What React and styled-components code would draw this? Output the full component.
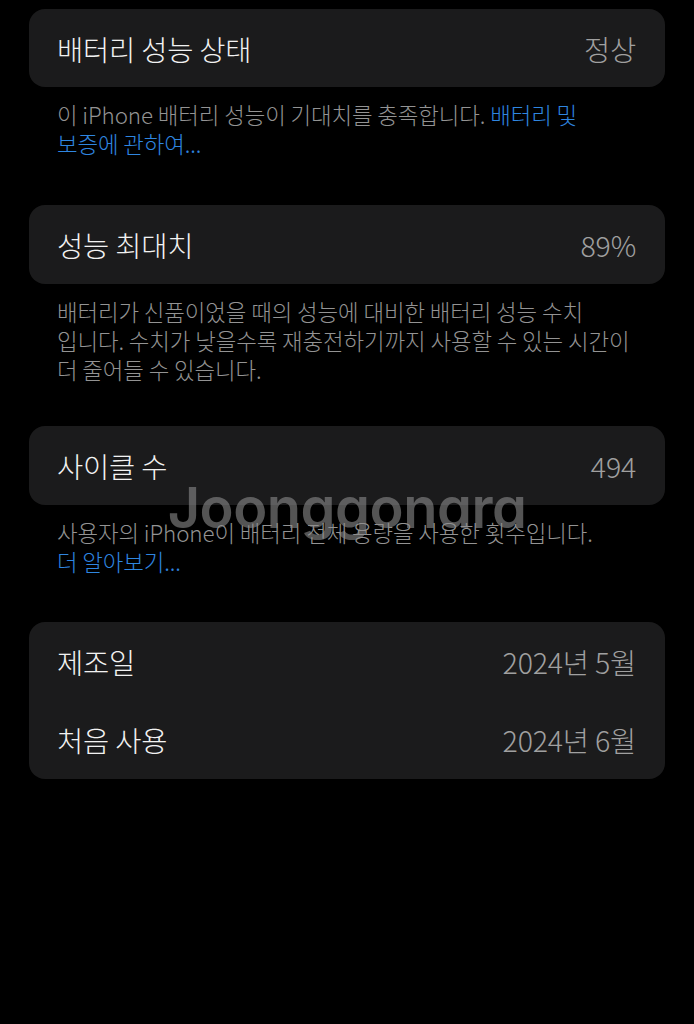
import React from "react";
import styled, { createGlobalStyle } from "styled-components";

const GlobalStyle = createGlobalStyle`
  html, body {
    margin: 0;
    padding: 0;
    background: #000;
  }
  body {
    font-family: "Noto Sans CJK KR", "Noto Sans", sans-serif;
    -webkit-font-smoothing: antialiased;
  }
`;

const Page = styled.div`
  position: relative;
  min-height: 1024px;
  background: #000;
  padding: 9px 29px 0;
  box-sizing: border-box;
`;

const Group = styled.div`
  background: #1b1b1c;
  border-radius: 16px;
  overflow: hidden;
`;

const Row = styled.div`
  display: flex;
  align-items: center;
  justify-content: space-between;
  height: ${(p) => p.$h || 78}px;
  padding: 0 29px 0 28px;
  font-size: 28.5px;
  font-weight: 300;
  letter-spacing: -0.2px;
`;

const Label = styled.span`
  color: #f2f2f2;
`;

const Value = styled.span`
  color: #a0a0a0;
`;

const Caption = styled.p`
  margin: 0;
  padding: 13px 28px ${(p) => p.$after || 44}px;
  font-size: 22.4px;
  font-weight: 300;
  line-height: 29px;
  color: #939393;
  letter-spacing: -0.1px;
  white-space: nowrap;
`;

const Link = styled.span`
  color: #2f86e0;
`;

// site watermark stamped across the middle of the page
const Watermark = styled.div`
  position: absolute;
  left: 0;
  right: 0;
  top: 474px;
  text-align: center;
  font-family: Inter, "Liberation Sans", sans-serif;
  font-feature-settings: "cv11" 1;
  font-size: 56px;
  font-weight: 600;
  letter-spacing: -0.5px;
  color: rgba(140, 140, 140, 0.6);
  pointer-events: none;
`;

export default function App() {
  return (
    <Page>
      <GlobalStyle />

      <Group>
        <Row>
          <Label>배터리 성능 상태</Label>
          <Value>정상</Value>
        </Row>
      </Group>
      <Caption $after={47}>
        이 iPhone 배터리 성능이 기대치를 충족합니다. <Link>배터리 및</Link>
        <br />
        <Link>보증에 관하여...</Link>
      </Caption>

      <Group>
        <Row $h={79}>
          <Label>성능 최대치</Label>
          <Value>89%</Value>
        </Row>
      </Group>
      <Caption $after={42}>
        배터리가 신품이었을 때의 성능에 대비한 배터리 성능 수치
        <br />
        입니다. 수치가 낮을수록 재충전하기까지 사용할 수 있는 시간이
        <br />
        더 줄어들 수 있습니다.
      </Caption>

      <Group>
        <Row $h={79}>
          <Label>사이클 수</Label>
          <Value>494</Value>
        </Row>
      </Group>
      <Caption $after={46}>
        사용자의 iPhone이 배터리 전체 용량을 사용한 횟수입니다.
        <br />
        <Link>더 알아보기...</Link>
      </Caption>

      <Group>
        <Row $h={78.5}>
          <Label>제조일</Label>
          <Value>2024년 5월</Value>
        </Row>
        <Row $h={78.5}>
          <Label>처음 사용</Label>
          <Value>2024년 6월</Value>
        </Row>
      </Group>

      <Watermark>Joonggonara</Watermark>
    </Page>
  );
}
